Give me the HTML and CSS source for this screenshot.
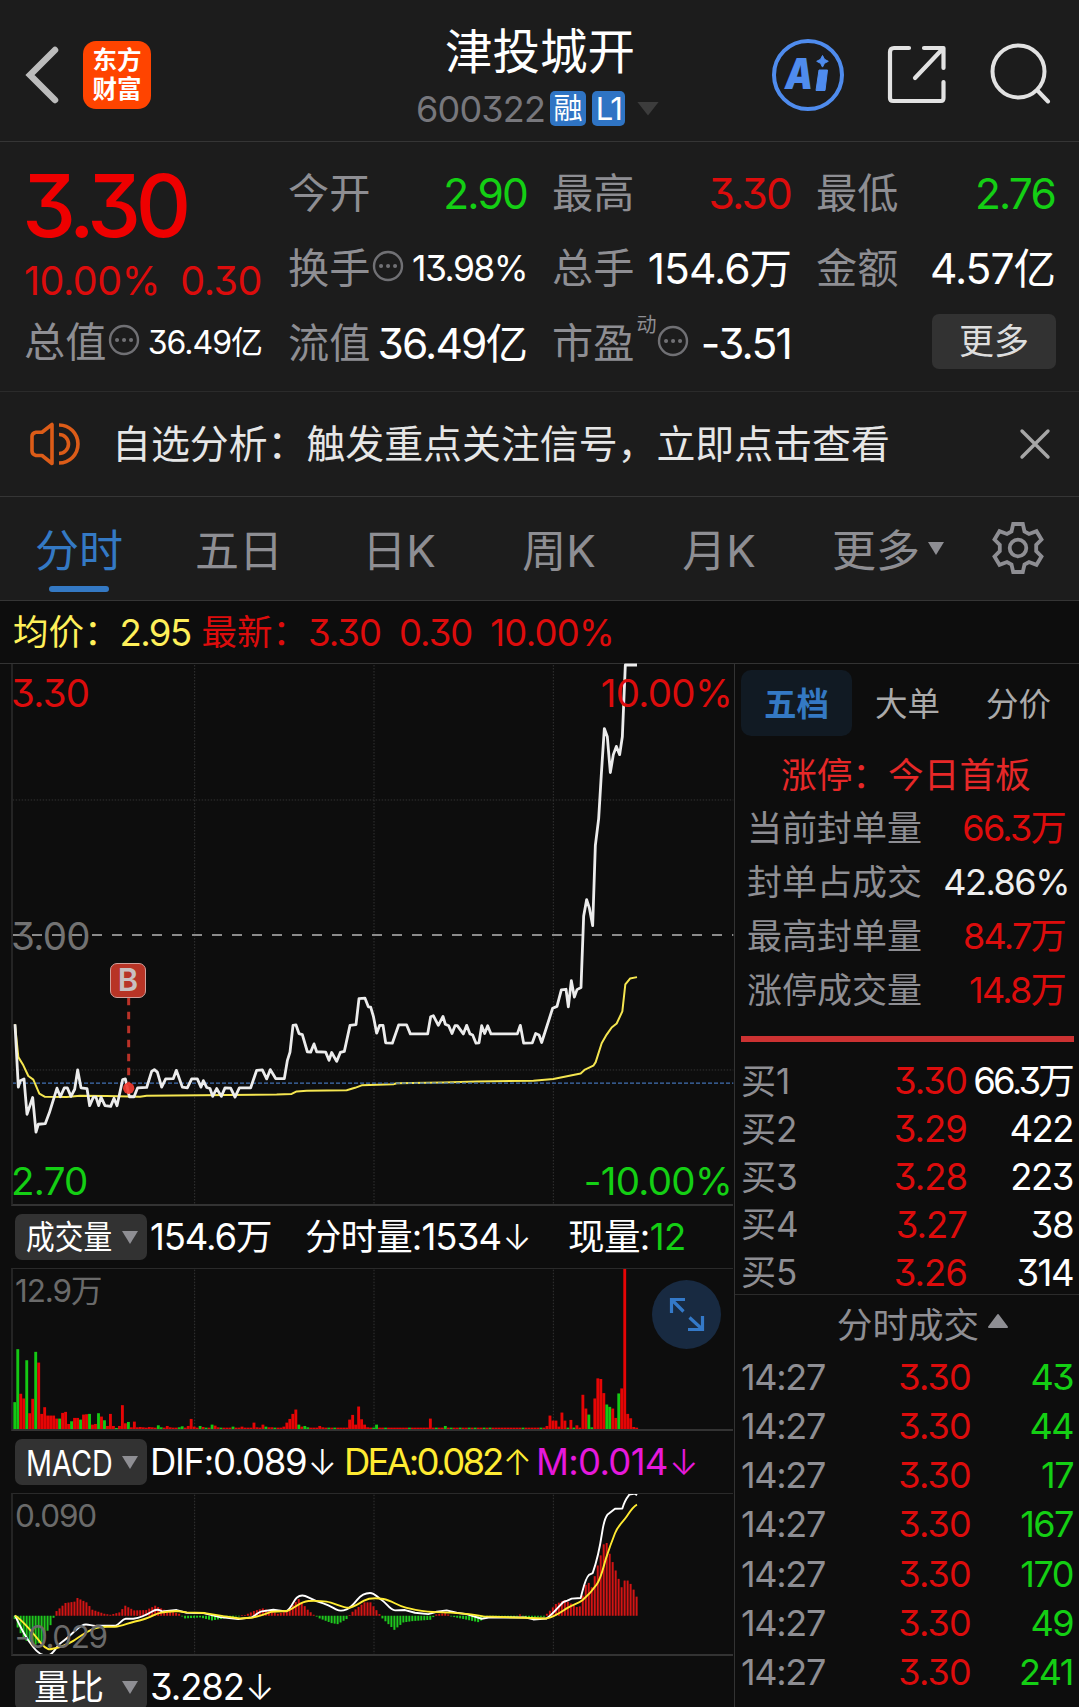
FILE: index.html
```html
<!DOCTYPE html>
<html lang="zh-CN">
<head>
<meta charset="utf-8">
<title>津投城开 600322</title>
<link rel="stylesheet" href="styles.css">
</head>
<body>
<header class="topbar">
  <svg class="back" viewBox="0 0 40 60"><path d="M33 6 8 31 33 56" fill="none" stroke="#bcbcbc" stroke-width="6.5" stroke-linecap="round" stroke-linejoin="miter"/></svg>
  <div class="logo"><span>东方</span><span>财富</span></div>
  <div class="title">
    <h1>津投城开</h1>
    <div class="code"><span class="code-num">600322</span><span class="badge">融</span><span class="badge badge-l1">L1</span><i class="tri-down tri-dark"></i></div>
  </div>
  <div class="actions">
    <svg class="ai" viewBox="0 0 74 74"><circle cx="37" cy="37" r="34" fill="none" stroke="#4f8cee" stroke-width="4"/><g fill="#4f8cee"><text class="ai-text" x="14" y="51" textLength="28" lengthAdjust="spacingAndGlyphs">A</text><path d="M48 32h8.500l-2.500 20.500h-9zM51.500 17.500l2 3.800 3.800 2-3.800 2-2 3.800-2-3.800-3.800-2 3.800-2z" stroke="#4f8cee" stroke-width="1" stroke-linejoin="round"/></g></svg>
    <svg class="share" viewBox="0 0 62 62"><g fill="none" stroke="#e2e2e2" stroke-width="4.200" stroke-linecap="round" stroke-linejoin="round"><path d="M23 4H8Q4 4 4 8V54Q4 57 7 57H55Q57.500 57 57.500 54V38M38 4H57.500V24M56 5.500 29 34"/></g></svg>
    <svg class="search" viewBox="0 0 62 62"><g fill="none" stroke="#e2e2e2" stroke-width="4" stroke-linecap="round"><circle cx="29.500" cy="29.500" r="26"/><path d="M48.500 48.500 59 59.500"/></g></svg>
  </div>
</header>

<section class="quote">
  <div class="quote-main">
    <div class="price">3.30</div>
    <div class="change"><span>10.00%</span><span>0.30</span></div>
    <div class="cell cell-first"><span class="lbl">总值</span><svg class="more-dot" viewBox="0 0 32 32"><circle cx="16" cy="16" r="14" /><path d="M9 16h.1M16 16h.1M23 16h.1"/></svg><b class="val xs">36.49亿</b></div>
  </div>
  <div class="quote-grid">
    <div class="cell"><span class="lbl">今开</span><b class="val green">2.90</b></div>
    <div class="cell"><span class="lbl">最高</span><b class="val red">3.30</b></div>
    <div class="cell"><span class="lbl">最低</span><b class="val green">2.76</b></div>
    <div class="cell"><span class="lbl">换手</span><svg class="more-dot" viewBox="0 0 32 32"><circle cx="16" cy="16" r="14" /><path d="M9 16h.1M16 16h.1M23 16h.1"/></svg><b class="val sm">13.98%</b></div>
    <div class="cell"><span class="lbl">总手</span><b class="val unit">154.6万</b></div>
    <div class="cell"><span class="lbl">金额</span><b class="val unit">4.57亿</b></div>
    <div class="cell"><span class="lbl">流值</span><b class="val tight">36.49亿</b></div>
    <div class="cell"><span class="lbl">市盈</span><sup class="dyn">动</sup><svg class="more-dot pe-dot" viewBox="0 0 32 32"><circle cx="16" cy="16" r="14" /><path d="M9 16h.1M16 16h.1M23 16h.1"/></svg><b class="val">-3.51</b></div>
    <div class="cell cell-end"><button class="more-btn">更多</button></div>
  </div>
</section>

<section class="notice">
  <svg class="speaker" viewBox="0 0 52 46"><g fill="none" stroke="#dc5c18" stroke-width="3.600"><path d="M23 3.500V42.500L13 34.500H7Q3 33.500 3 30V15.500Q3 12 7 11.200H13Z" stroke-linejoin="round"/><path d="M30 13.500A9.500 9.500 0 0 1 30 32.500M30 4A19 19 0 0 1 30 42"/></g></svg>
  <p>自选分析：触发重点关注信号，立即点击查看</p>
  <svg class="close" viewBox="0 0 32 32"><path d="M3 3 29 29M29 3 3 29" stroke="#a6a6a6" stroke-width="3.400" stroke-linecap="round"/></svg>
</section>

<nav class="tabs">
  <a class="tab active">分时</a><a class="tab">五日</a><a class="tab">日K</a><a class="tab">周K</a><a class="tab">月K</a>
  <a class="tab-more">更多<i class="tri-down"></i></a>
  <svg class="gear" viewBox="-27 -27 54 54"><g fill="none" stroke="#8e8e93" stroke-width="3.800"><path d="M-4.800-24H4.800L6.500-16.500 11-14 18.500-16.800 23.500-8.500 18.200-3.200V3.200L23.500 8.500 18.500 16.800 11 14 6.500 16.500 4.800 24H-4.800L-6.500 16.500-11 14-18.500 16.800-23.500 8.500-18.200 3.200V-3.200L-23.500-8.500-18.500-16.800-11-14-6.500-16.500Z"/><circle r="8.300"/></g></svg>
</nav>

<div class="avgbar"><span class="yellow">均价：</span><span class="num yellow">2.95</span><span class="red latest">最新：</span><span class="num red">3.30</span><span class="num red">0.30</span><span class="num red last">10.00%</span></div>

<main class="body">
  <div class="charts">
    <div class="plot plot-price">
      <svg viewBox="0 0 2202 1530" preserveAspectRatio="none">
        <g class="grid">
          <path d="M584 14V1522M1122 14V1522M1660 14V1522" stroke-dasharray="1.500 1.500"/>
          <path d="M38 392H2200M38 1148H2200" stroke-dasharray="1.500 1.500"/>
        </g>
        <path class="line mid" d="M36 770H2200"/>
        <path class="line avg" d="M45 1020 55 1112 70 1135 85 1165 100 1175 118 1214 135 1223 200 1224 240 1220 320 1221 420 1223 440 1220 600 1219 830 1217 875 1215 890 1208 920 1206 1040 1205 1065 1198 1085 1191 1180 1188 1190 1185 1330 1183 1430 1180 1600 1178 1660 1173 1742 1158 1755 1147 1780 1136 1787 1126 1805 1073 1820 1049 1835 1029 1850 1018 1867 984 1876 908 1890 892 1911 888"/>
        <path class="line cost" d="M36 1185H2200"/>
        <path class="line px" d="M45 1020 55 1196 61 1178 72 1173 81 1272 98 1225 108 1322 115 1300 136 1298 148 1268 171 1199 181 1223 193 1198 202 1198 213 1222 224 1202 233 1148 243 1198 261 1200 269 1248 280 1224 288 1224 296 1248 303 1224 315 1248 332 1250 342 1227 351 1248 368 1175 376 1173 388 1223 402 1223 413 1198 440 1197 455 1152 463 1147 472 1154 485 1196 497 1173 520 1172 529 1149 547 1196 562 1198 575 1173 592 1173 603 1196 610 1178 620 1197 630 1200 638 1222 650 1200 664 1222 675 1198 692 1199 705 1224 718 1198 752 1198 770 1149 787 1148 800 1173 811 1147 827 1172 853 1172 862 1122 870 1098 879 1023 888 1022 897 1046 907 1049 922 1097 932 1098 942 1075 950 1097 977 1098 987 1121 995 1099 1010 1124 1021 1099 1033 1096 1050 1023 1068 1021 1077 948 1095 947 1105 971 1112 972 1120 997 1130 1045 1139 1023 1149 1023 1157 1072 1177 1073 1196 1022 1220 1022 1231 1047 1283 1047 1292 999 1300 996 1315 1023 1329 998 1336 1020 1346 1024 1356 1046 1365 1024 1372 1024 1390 1047 1400 1023 1410 1047 1418 1050 1428 1073 1437 1072 1445 1024 1454 1046 1463 1024 1473 1047 1552 1047 1561 1023 1571 1073 1597 1072 1607 1046 1617 1050 1625 1071 1658 975 1671 970 1684 924 1698 922 1705 971 1714 898 1723 944 1731 923 1743 917 1751 717 1760 671 1768 694 1778 744 1786 520 1796 444 1804 320 1813 192 1822 215 1831 315 1840 265 1849 242 1859 265 1867 215 1876 14 1911 14"/>
        <path class="line buy" d="M386 946V1190"/>
        <ellipse cx="386" cy="1199" rx="17" ry="16" fill="#f23c32" opacity=".92"/>
      </svg>
      <span class="tag tl red">3.30</span><span class="tag tr red">10.00%</span>
      <span class="tag ml">3.00</span><span class="tag bl green">2.70</span><span class="tag br green">-10.00%</span>
      <span class="buy-mark">B</span>
    </div>

    <div class="ind-head"><button class="pill"><span class="sq-cjk">成交量</span><i class="tri-down"></i></button><span class="iv v1">154.6万</span><span class="iv v2">分时量:1534<i class="ar">↓</i></span><span class="iv v3">现量:<span class="green">12</span></span></div>
    <div class="plot plot-sub">
      <svg viewBox="0 190 2202 486" preserveAspectRatio="none">
        <g class="grid"><path d="M584 195V675M1122 195V675M1660 195V675" stroke-dasharray="1.500 1.500"/></g>
        <g id="volume"></g>
      </svg>
      <span class="tag sub-top">12.9万</span>
      <button class="expand"><svg viewBox="0 0 69 69"><path d="M19.500 33V19.500H33M20 20 31.500 31.500M50.500 36V49.500H36M50 49 37.500 37.500" fill="none" stroke="#3479c8" stroke-width="3.200"/></svg></button>
    </div>

    <div class="ind-head"><button class="pill"><span class="sq-lat">MACD</span><i class="tri-down"></i></button><span class="iv m1">DIF:0.089<i class="ar">↓</i></span><span class="iv m2">DEA:0.082<i class="ar">↑</i></span><span class="iv m3">M:0.014<i class="ar">↓</i></span></div>
    <div class="plot plot-sub">
      <svg viewBox="0 865 2202 486" preserveAspectRatio="none">
        <g class="grid"><path d="M584 870V1350M1122 870V1350M1660 870V1350" stroke-dasharray="1.500 1.500"/></g>
        <g id="macd"></g>
        <path class="line dif" d="M45 1230C65 1275 80 1300 100 1325S135 1352 148 1348 170 1320 185 1310 215 1285 225 1276 245 1257 258 1257 275 1262 290 1261L345 1261C360 1258 365 1241 377 1240L400 1240C425 1236 440 1228 455 1219S475 1213 487 1218L530 1214 560 1222 610 1223 660 1235 715 1241 755 1236C770 1228 775 1220 785 1218L820 1213 858 1218C875 1210 880 1185 890 1177S910 1168 925 1176 950 1188 970 1194 1000 1208 1010 1213 1030 1216 1040 1212 1060 1198 1072 1183 1095 1163 1110 1163 1130 1175 1145 1184 1170 1215 1185 1215L1215 1214 1245 1222 1285 1226 1310 1219 1340 1215 1370 1222 1400 1226 1445 1240 1470 1236 1575 1236 1600 1242 1640 1239C1655 1230 1675 1205 1690 1190L1702 1186 1715 1180 1742 1178C1750 1150 1755 1120 1767 1109L1778 1104C1790 1070 1800 1025 1806 985S1818 935 1822 930L1845 912 1867 911C1875 885 1880 880 1888 870L1905 867 1911 872"/>
        <path class="line dea" d="M45 1230C75 1250 105 1290 125 1315S155 1328 165 1328 205 1315 220 1306 255 1280 280 1270 325 1265 345 1264 385 1252 405 1248 445 1238 460 1230 485 1220 530 1217L560 1221 615 1223 670 1232 720 1239 760 1236C780 1232 795 1226 815 1219L860 1217C885 1210 900 1188 925 1187S960 1186 980 1189 1030 1207 1045 1207 1075 1195 1092 1186 1125 1177 1150 1181 1190 1200 1215 1206 1260 1219 1300 1220 1400 1222 1450 1233L1640 1239C1665 1234 1680 1222 1700 1209S1735 1195 1748 1184 1775 1160 1790 1138 1810 1085 1818 1060 1835 1010 1845 985 1870 950 1880 935 1900 905 1911 900"/>
      </svg>
      <span class="tag sub-top">0.090</span><span class="tag sub-bot">-0.029</span>
    </div>

    <div class="ind-head ind-last"><button class="pill"><span class="pill-wide">量比</span><i class="tri-down"></i></button><span class="iv v1">3.282<i class="ar">↓</i></span></div>
  </div>

  <aside class="side">
    <div class="side-tabs"><a class="on">五档</a><a>大单</a><a>分价</a></div>
    <div class="limit-title">涨停：今日首板</div>
    <div class="stat"><span>当前封单量</span><b class="red">66.3万</b></div>
    <div class="stat"><span>封单占成交</span><b class="pct">42.86%</b></div>
    <div class="stat"><span>最高封单量</span><b class="red">84.7万</b></div>
    <div class="stat"><span>涨停成交量</span><b class="red">14.8万</b></div>
    <div class="ratio"></div>
    <div class="bids">
      <div class="bid"><span>买1</span><b class="red">3.30</b><b class="big">66.3万</b></div>
      <div class="bid"><span>买2</span><b class="red">3.29</b><b>422</b></div>
      <div class="bid"><span>买3</span><b class="red">3.28</b><b>223</b></div>
      <div class="bid"><span>买4</span><b class="red">3.27</b><b>38</b></div>
      <div class="bid"><span>买5</span><b class="red">3.26</b><b>314</b></div>
    </div>
    <div class="ticks-title">分时成交<svg viewBox="0 0 22 16"><path d="M11 2 20 14H2Z" fill="#8e8e93" stroke="#8e8e93" stroke-width="2" stroke-linejoin="round"/></svg></div>
    <div class="ticks">
      <div class="tick"><span>14:27</span><b class="red">3.30</b><b class="green">43</b></div>
      <div class="tick"><span>14:27</span><b class="red">3.30</b><b class="green">44</b></div>
      <div class="tick"><span>14:27</span><b class="red">3.30</b><b class="green">17</b></div>
      <div class="tick"><span>14:27</span><b class="red">3.30</b><b class="green">167</b></div>
      <div class="tick"><span>14:27</span><b class="red">3.30</b><b class="green">170</b></div>
      <div class="tick"><span>14:27</span><b class="red">3.30</b><b class="green">49</b></div>
      <div class="tick"><span>14:27</span><b class="red">3.30</b><b class="green">241</b></div>
    </div>
  </aside>
</main>
<script src="charts.js"></script>
</body>
</html>
```
FILE: styles.css
```css
* { box-sizing: border-box; margin: 0; padding: 0; }
body {
  width: 1079px; height: 1707px; overflow: hidden;
  background: #0d0d0d; color: #fff;
  font-family: Inter, "Noto Sans CJK SC", sans-serif;
  font-feature-settings: "cv09" 1;
  font-weight: 400; line-height: 1;
}
b, i, h1 { font-weight: 400; font-style: normal; }
button { border: 0; color: inherit; font: inherit; font-feature-settings: inherit; }
svg { display: block; flex: none; }
.red { color: #dc0c0c; }
.green { color: #14cf14; }
.yellow { color: #fff05a; }
.tri-down { width: 16px; height: 13px; background: #8e8e93; clip-path: polygon(0 0, 100% 0, 50% 100%); flex: none; }

/* top bar */
.topbar { display: flex; height: 142px; background: #1c1c1c; border-bottom: 1px solid #353535; }
.back { width: 40px; height: 60px; margin: 44px 0 0 22px; }
.logo { width: 68px; height: 68px; margin: 41px 0 0 21px; border-radius: 13px; background: #ff4400; display: flex; flex-direction: column; align-items: center; justify-content: center; font-weight: 700; font-size: 24.5px; line-height: 29px; }
.title { width: 250px; margin-left: 265px; }
.title h1 { font-size: 47.5px; line-height: 60px; margin-top: 22px; padding-left: 29px; white-space: nowrap; }
.code { display: flex; align-items: center; height: 53px; }
.code-num { width: 134px; font-size: 36px; letter-spacing: -.8px; color: #77777c; }
.badge { width: 36px; height: 35px; border-radius: 5px; background: #2f74c4; font-size: 29px; line-height: 36px; text-align: center; }
.badge-l1 { width: 33px; margin-left: 6px; font-size: 31px; letter-spacing: -1.5px; }
.tri-dark { margin-left: 12px; width: 22px; height: 14px; background: #3c3c3c; }
.actions { display: flex; margin-left: 105px; }
.ai { width: 74px; height: 74px; margin-top: 38px; }
.ai-text { font: italic 900 43px Inter, sans-serif; }
.share { width: 62px; height: 62px; margin: 44px 0 0 41px; }
.search { width: 62px; height: 62px; margin: 42px 0 0 41px; }

/* quote block */
.quote { display: flex; gap: 26px; height: 250px; padding: 14px 22px 0 24px; background: #1c1c1c; border-bottom: 1px solid #2b2b2b; }
.quote-main { width: 238px; }
.price { height: 101px; line-height: 101px; font-size: 86px; font-weight: 500; letter-spacing: -5.500px; margin-left: -2px; color: #ee0000; }
.change { display: flex; justify-content: space-between; height: 48px; line-height: 48px; font-size: 39.500px; letter-spacing: -.5px; color: #dc0c0c; }
.quote-grid { display: grid; grid-template-columns: repeat(3, 238px); grid-auto-rows: 75px; column-gap: 26px; }
.cell { display: flex; align-items: center; height: 75px; padding-top: 1px; white-space: nowrap; }
.lbl { color: #8e8e93; font-size: 41.200px; }
.val { margin: 0 -1px 0 auto; font-size: 42.500px; letter-spacing: -1.800px; }
.val.unit { letter-spacing: -1px; }
.val.tight { letter-spacing: -1.900px; margin-right: 0; }
.val.sm { font-size: 35.500px; letter-spacing: -1.600px; }
.val.xs { font-size: 32px; letter-spacing: -1px; margin-right: 0; }
.more-dot { width: 32px; height: 32px; margin: -7px 0 0 2px; fill: none; stroke: #707074; stroke-width: 2.4; stroke-linecap: round; }
.more-dot path { stroke-width: 4; }
.dyn { align-self: flex-start; margin: 8px 0 0 2px; font-size: 20px; color: #8e8e93; }
.pe-dot { margin-left: 1px; }
.cell-end { justify-content: flex-end; }
.more-btn { width: 124px; height: 55px; margin: -6px -2px 0 0; border-radius: 7px; background: #323232; color: #dedede; font-size: 35px; padding-top: 1px; }

/* notice */
.notice { display: flex; align-items: center; height: 105px; padding-left: 29px; background: #1c1c1c; border-bottom: 1px solid #353535; }
.speaker { width: 52px; height: 46px; }
.notice p { margin-left: 31px; font-size: 38.900px; color: #e6e6e6; white-space: nowrap; }
.close { width: 32px; height: 32px; margin: -1px 0 0 129px; }

/* period tabs */
.tabs { display: flex; height: 104px; line-height: 109px; background: #1c1c1c; border-bottom: 1px solid #353535; font-size: 44px; color: #8e8e93; }
.tab { width: 160px; text-align: center; position: relative; left: -1px; white-space: nowrap; }
.tab.active { color: #3479c4; }
.tab.active::after { content: ""; position: absolute; left: 50px; bottom: 8px; width: 60px; height: 6px; border-radius: 3px; background: #3479c4; }
.tab-more { display: flex; align-items: center; height: 109px; margin-left: 32px; }
.tab-more i { margin: -6px 0 0 8px; }
.gear { width: 54px; height: 54px; margin: 24px 0 0 47px; }

/* average / latest line */
.avgbar { display: flex; align-items: center; height: 63px; padding: 2px 0 0 13px; font-size: 35.500px; border-bottom: 1px solid #333; white-space: nowrap; }
.avgbar .num { font-size: 36.500px; letter-spacing: -1px; margin: 0 18px 0 0; }
.avgbar .num.yellow { margin: 0 11px 0 0; letter-spacing: -1.600px; }
.avgbar .num.last { margin-left: 0; letter-spacing: -.8px; }

/* chart column */
.body { display: flex; height: 1043px; }
.charts { width: 735px; border-right: 1px solid #333; flex: none; }
.plot { display: flow-root; position: relative; }
.plot svg { width: 734px; height: 100%; }
.plot::before { content: ""; position: absolute; inset: 0 1px 0 11px; border-left: 2px solid #242424; border-bottom: 2px solid #333; }
.plot-price { height: 542px; }
.plot-price > svg { height: 546.400px; margin-top: -4px; }
.plot-sub { height: 163px; }
.plot-sub::before { border-top: 1px solid #2a2a2a; }
.grid path { stroke: #333; stroke-width: 1; fill: none; vector-effect: non-scaling-stroke; }
.line { fill: none; vector-effect: non-scaling-stroke; stroke-linejoin: round; }
.px { stroke: #ececec; stroke-width: 2.8; }
.avg { stroke: #f5e650; stroke-width: 2; }
.mid { stroke: #8b8b8b; stroke-width: 1.8; stroke-dasharray: 10 10; }
.cost { stroke: #4271b4; stroke-width: 1.2; stroke-dasharray: 4 2; }
.buy { stroke: #b93228; stroke-width: 3; stroke-dasharray: 7.5 6.5; }
.dif { stroke: #fff; stroke-width: 1.9; }
.dea { stroke: #ffeb32; stroke-width: 1.9; }
.tag { position: absolute; font-size: 38.500px; letter-spacing: -.7px; line-height: 40px; }
.tl { left: 11px; top: 9px; }
.tr { right: 2px; top: 9px; }
.ml { left: 11px; top: 252px; color: #727272; }
.bl { left: 11px; top: 497px; }
.br { right: 2px; top: 497px; }
.tag.sub-top, .tag.sub-bot { left: 15px; font-size: 31.500px; letter-spacing: -1.100px; color: #6a6a6a; }
.tag.sub-bot { letter-spacing: -1.500px; }
.sub-top { top: 3px; }
.sub-bot { top: 124px; }
.buy-mark { position: absolute; left: 110px; top: 299px; width: 36px; height: 35px; border-radius: 7px; border: 1.500px solid #d0a09c; background: #b83426; color: #c8c0c0; font-size: 31px; font-weight: 600; line-height: 32px; text-align: center; }
.expand { position: absolute; left: 652px; top: 12px; width: 69px; height: 69px; border-radius: 50%; background: #182a41; }
.plot .expand svg { width: 69px; height: 69px; }
.ind-head { display: flex; align-items: center; height: 62px; padding: 0 0 0 15px; font-size: 36.500px; white-space: nowrap; }
.pill { position: relative; width: 132px; height: 46px; border-radius: 7px; background: #323232; display: flex; align-items: center; padding: 1px 0 0 11px; flex: none; }
.pill .tri-down { position: absolute; left: 107px; top: 17px; }
.sq-cjk { font-size: 33px; transform: scaleX(.87); transform-origin: 0 50%; }
.sq-lat { font-size: 36px; transform: scaleX(.8); transform-origin: 0 50%; }
.pill-wide { padding-left: 8px; font-size: 35px; }
.iv { display: flex; align-items: center; letter-spacing: -1.1px; }
.v1 { width: 124px; margin-left: 3px; }
.v2 { width: 230px; margin-left: 31px; letter-spacing: -.9px; }
.v3 { margin-left: 33px; letter-spacing: -.6px; }
.m1 { width: 194px; margin-left: 3px; letter-spacing: -1.300px; }
.m2 { width: 192px; letter-spacing: -2.900px; color: #ffeb32; }
.m3 { letter-spacing: -.7px; color: #e619dc; }
.ar { display: flex; justify-content: center; width: 20px; margin-left: 6px; font-size: 35px; font-weight: 300; letter-spacing: 0; }

/* order book column */
.side { width: 344px; padding-top: 6px; }
.side-tabs { display: flex; padding-left: 6px; height: 66px; line-height: 70px; text-align: center; font-size: 32.500px; color: #aaa; }
.side-tabs a { width: 111px; border-radius: 10px; }
.side-tabs .on { background: #111a23; color: #3479c4; font-weight: 700; }
.limit-title { height: 65px; line-height: 78px; padding-left: 46px; font-size: 35.700px; color: #e62828; }
.stat { display: flex; align-items: center; justify-content: space-between; height: 54.100px; padding: 1px 11px 0 12px; font-size: 35px; color: #8e8e93; }
.stat b { letter-spacing: -1.700px; font-size: 36px; margin: -1px 3px 0 0; }
.stat .pct { color: #eee; letter-spacing: -1.5px; margin-right: -1px; }
.ratio { height: 6px; margin: 19px 5px 0 6px; background: #cc3232; }
.bids { padding: 15px 5px 0 6px; height: 252px; }
.bid { display: grid; grid-template-columns: 114px 112px 1fr; align-items: center; height: 47.900px; font-size: 36.500px; white-space: nowrap; }
.bid span, .tick span { color: #8e8e93; }
.bid span { font-size: 35px; }
.bid b, .tick b { text-align: right; letter-spacing: -1px; }
.bid b:last-child, .tick b:last-child { letter-spacing: -1.500px; padding-right: 1px; }
.bid .big:last-child { margin-left: -10px; letter-spacing: -2.800px; padding-right: 2px; }
.ticks-title { display: flex; align-items: center; justify-content: center; gap: 8px; height: 58px; border-top: 1px solid #2b2b2b; padding: 3px 0 0 32px; font-size: 35.600px; color: #8e8e93; }
.ticks-title svg { width: 22px; height: 16px; margin-top: -9px; }
.ticks { padding: 0 5px 0 6px; }
.tick { display: grid; grid-template-columns: 114px 116px 1fr; align-items: center; height: 49.150px; font-size: 36px; letter-spacing: -1.3px; }
.tick b { letter-spacing: -.8px; }
```
FILE: charts.js
```js
const NS = 'http://www.w3.org/2000/svg';
const MINUTES = 209;
const STEP = 8.97;

function bar(group, x, y, w, h, fill) {
  const r = document.createElementNS(NS, 'rect');
  r.setAttribute('x', x.toFixed(1));
  r.setAttribute('y', y);
  r.setAttribute('width', w);
  r.setAttribute('height', h);
  r.setAttribute('fill', fill);
  group.appendChild(r);
}

// Minute volumes: [minute, values...]; negative values are falling minutes.
const runs = [
  [0, -85, -243, 110, 96, -210, 52, 95, -235, 203, 50, 70, 45, 45, 45, 36, -36, 53, 56, 20, -28, 38, 38, -33, 48, 49, -50, 18, 20, -52, 42, -31, 14, 50, 14, -8, 14, 76, 22, -26, 10, 27, 10, 11, 10, 9, 11, 10, 9, -16, -10, 9, 14, 10],
  [55, -10, -13, 9, 14, 35, 12, 9, -14, 11, -9, 9, -18, 15, 10, -9], [73, -12], [76, 12], [80, 24, 10, 9, 18, -12, 10, 10, -9],
  [90, 12, 24, 35, 50, 63, -18, 12, -14, -10], [102, 14, 10, 9, -9, 9, -9], [112, 33, 47, 18, 72, 34, 18, 10, 9, -9, -18],
  [124, -9], [132, -9], [139, 36], [141, -9], [144, -14], [146, -9], [149, -9], [152, -9], [154, -9], [157, -9], [159, -9], [170, -9], [176, -9],
  [178, 14, 45, 30, 30, 12, 54, 30, -9, 32, -9, 16, 9, 107, 66, -48, -10, 96, 156, 154, 112, -78, -71, 66, 38, -111, 126, 484, 50, 37, 11, 9]
];
const volume = new Array(MINUTES).fill(9);
runs.forEach(([at, ...vals]) => vals.forEach((v, k) => { volume[at + k] = v; }));
const volG = document.getElementById('volume');
volume.forEach((v, i) => {
  const h = Math.abs(v);
  bar(volG, 40 + i * STEP, 675 - h, 8.6, h, v < 0 ? '#14c814' : '#e60505');
});

// Histogram given at turning points, interpolated per minute.
const knots = [[0, -10], [1, -35], [2, -52], [4, -75], [7, -86], [9, -78], [12, -28], [13, -6], [14, 14], [17, 38], [20, 42], [21, 53], [24, 40], [26, 18], [30, 6], [32, 3], [35, 10], [37, 30], [40, 16], [44, 17], [47, 30], [50, 18], [55, 6], [57, -8], [62, -5], [66, -14], [72, -5], [77, 2], [80, 14], [83, 22], [88, 6], [91, 15], [95, 50], [98, 18], [100, 3], [102, -8], [106, -22], [108, -25], [111, -10], [113, 12], [117, 40], [119, 40], [122, 5], [123, -8], [127, -42], [130, -20], [133, -16], [139, -12], [141, 4], [144, 8], [147, -4], [155, -19], [158, -5], [167, -4], [169, 4], [171, -4], [177, -3], [179, 15], [181, 35], [184, 47], [188, 26], [189, 28], [190, 60], [191, 92], [192, 98], [193, 85], [194, 118], [195, 150], [196, 180], [197, 213], [198, 217], [199, 185], [201, 135], [203, 85], [204, 105], [205, 105], [206, 95], [207, 78], [208, 57]];
const macdG = document.getElementById('macd');
let k = 0;
for (let i = 0; i < MINUTES; i++) {
  while (k < knots.length - 2 && knots[k + 1][0] <= i) k++;
  const [x0, y0] = knots[k], [x1, y1] = knots[k + 1];
  const v = y0 + (y1 - y0) * (i - x0) / (x1 - x0);
  const h = Math.max(2, Math.abs(v));
  bar(macdG, 41 + i * STEP, v > 0 ? 1231 - h : 1231, 6, h, v > 0 ? '#d21414' : '#1ec81e');
}
```
